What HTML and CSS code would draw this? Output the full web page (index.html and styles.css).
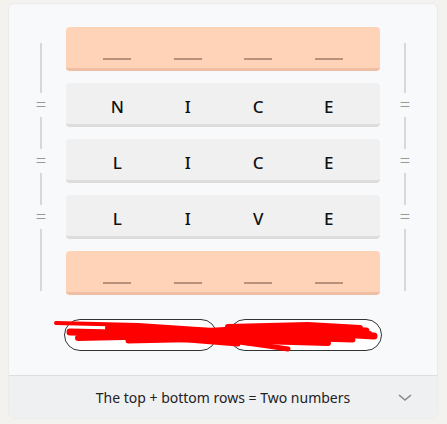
FILE: index.html
```html
<!DOCTYPE html>
<html lang="en">
<head>
    <meta charset="UTF-8">
    <meta name="viewport" content="width=device-width, initial-scale=1.0">
    <title>Word ladder</title>
    <link rel="stylesheet" href="styles.css">
</head>
<body>
    <div class="card">
        <div class="board">
            <!-- left rail -->
            <div class="side">
                <span class="seg seg-first"></span>
                <span class="eq">=</span>
                <span class="seg"></span>
                <span class="eq">=</span>
                <span class="seg"></span>
                <span class="eq">=</span>
                <span class="seg seg-last"></span>
            </div>

            <div class="rows">
                <div class="row blank">
                    <span class="cell"><i class="dash"></i></span>
                    <span class="cell"><i class="dash"></i></span>
                    <span class="cell"><i class="dash"></i></span>
                    <span class="cell"><i class="dash"></i></span>
                </div>
                <div class="row">
                    <span class="cell">N</span>
                    <span class="cell">I</span>
                    <span class="cell">C</span>
                    <span class="cell">E</span>
                </div>
                <div class="row">
                    <span class="cell">L</span>
                    <span class="cell">I</span>
                    <span class="cell">C</span>
                    <span class="cell">E</span>
                </div>
                <div class="row">
                    <span class="cell">L</span>
                    <span class="cell">I</span>
                    <span class="cell">V</span>
                    <span class="cell">E</span>
                </div>
                <div class="row blank">
                    <span class="cell"><i class="dash"></i></span>
                    <span class="cell"><i class="dash"></i></span>
                    <span class="cell"><i class="dash"></i></span>
                    <span class="cell"><i class="dash"></i></span>
                </div>
            </div>

            <!-- right rail -->
            <div class="side">
                <span class="seg seg-first"></span>
                <span class="eq">=</span>
                <span class="seg"></span>
                <span class="eq">=</span>
                <span class="seg"></span>
                <span class="eq">=</span>
                <span class="seg seg-last"></span>
            </div>
        </div>

        <div class="actions">
            <button class="pill"></button>
            <button class="pill"></button>
            <!-- scribbled over -->
            <svg class="scribble" viewBox="0 0 430 32" width="430" height="32">
                <g fill="none" stroke="#ff0000" stroke-linecap="round" stroke-linejoin="round">
                    <path d="M48 4 L130 6 L220 12 L300 11 L362 14" stroke-width="4"/>
                    <path d="M62 13 L150 15 L240 18 L330 15 L366 17" stroke-width="7"/>
                    <path d="M70 19 L160 17 L250 22 L320 24" stroke-width="6"/>
                    <path d="M100 9 L200 12 L250 9" stroke-width="6"/>
                    <path d="M120 22 L210 20 L260 27 L280 30" stroke-width="5"/>
                    <path d="M220 8 L300 6 L352 9" stroke-width="6"/>
                    <path d="M232 14 L300 10 L358 12" stroke-width="7"/>
                    <path d="M240 24 L310 20 L345 21" stroke-width="5"/>
                    <path d="M150 11 L230 15 L290 17" stroke-width="6"/>
                    <path d="M80 16 L180 21 L230 25" stroke-width="5"/>
                </g>
            </svg>
        </div>

        <div class="hint">
            <span>The top + bottom rows = Two numbers</span>
            <svg class="chevron" viewBox="0 0 14 8" width="14" height="8">
                <polyline points="1,1 7,6 13,1" fill="none" stroke="#8a8a8a" stroke-width="1.6"/>
            </svg>
        </div>
    </div>
</body>
</html>
```

FILE: styles.css
```css
body {
    margin: 0;
    padding: 0;
    background-color: #f3f2ef;
    font-family: "Noto Sans", "Open Sans", sans-serif;
}

.card {
    margin: 3px 0 0 8px;
    width: 430px;
    height: 416px;
    box-sizing: border-box;
    background-color: #f8f9fb;
    border: 1px solid #ebebeb;
    border-radius: 6px;
    overflow: hidden;
    display: flex;
    flex-direction: column;
}

.board {
    display: grid;
    grid-template-columns: 50px 314px 50px;
    padding: 23px 7px 0 7px;
}

.side {
    display: flex;
    flex-direction: column;
    align-items: center;
    padding-top: 16px;
}

.seg {
    width: 2px;
    height: 32px;
    background-color: #d8d8d8;
}

.seg-first {
    height: 50px;
}

.seg-last {
    height: 62px;
}

.eq {
    height: 24px;
    line-height: 23px;
    font-size: 19px;
    font-weight: 300;
    color: #999;
}

.rows {
    display: flex;
    flex-direction: column;
    gap: 12px;
}

.row {
    height: 41px;
    display: grid;
    grid-template-columns: repeat(4, 1fr);
    padding: 0 16px;
    background-color: #f0f0f0;
    border-bottom: 3px solid #dcdcdc;
    border-radius: 4px;
}

.row.blank {
    background-color: #ffd3b8;
    border-bottom-color: #efbfa3;
}

.cell {
    display: flex;
    justify-content: center;
    align-items: center;
    padding-top: 5px;
    font-size: 17px;
    font-weight: 500;
    color: #111;
}

.blank .cell {
    align-items: flex-end;
    padding: 0 0 8px 0;
}

.dash {
    display: block;
    width: 28px;
    height: 2px;
    background-color: #b8917a;
}

.actions {
    position: relative;
    display: flex;
    justify-content: center;
    gap: 12px;
    margin-top: 24px;
    height: 32px;
}

.pill {
    width: 153px;
    height: 32px;
    border: 1px solid #333;
    border-radius: 16px;
    background: #fff;
    font-family: inherit;
    font-size: 13px;
}

.scribble {
    position: absolute;
    left: -1px;
    top: 0;
    overflow: visible;
}

.hint {
    position: relative;
    margin-top: auto;
    height: 42px;
    border-top: 1px solid #dedede;
    background-color: #eff0f2;
    display: flex;
    justify-content: center;
    align-items: center;
    font-size: 14px;
    color: #222;
}

.chevron {
    position: absolute;
    right: 25px;
    top: 18px;
}
```
